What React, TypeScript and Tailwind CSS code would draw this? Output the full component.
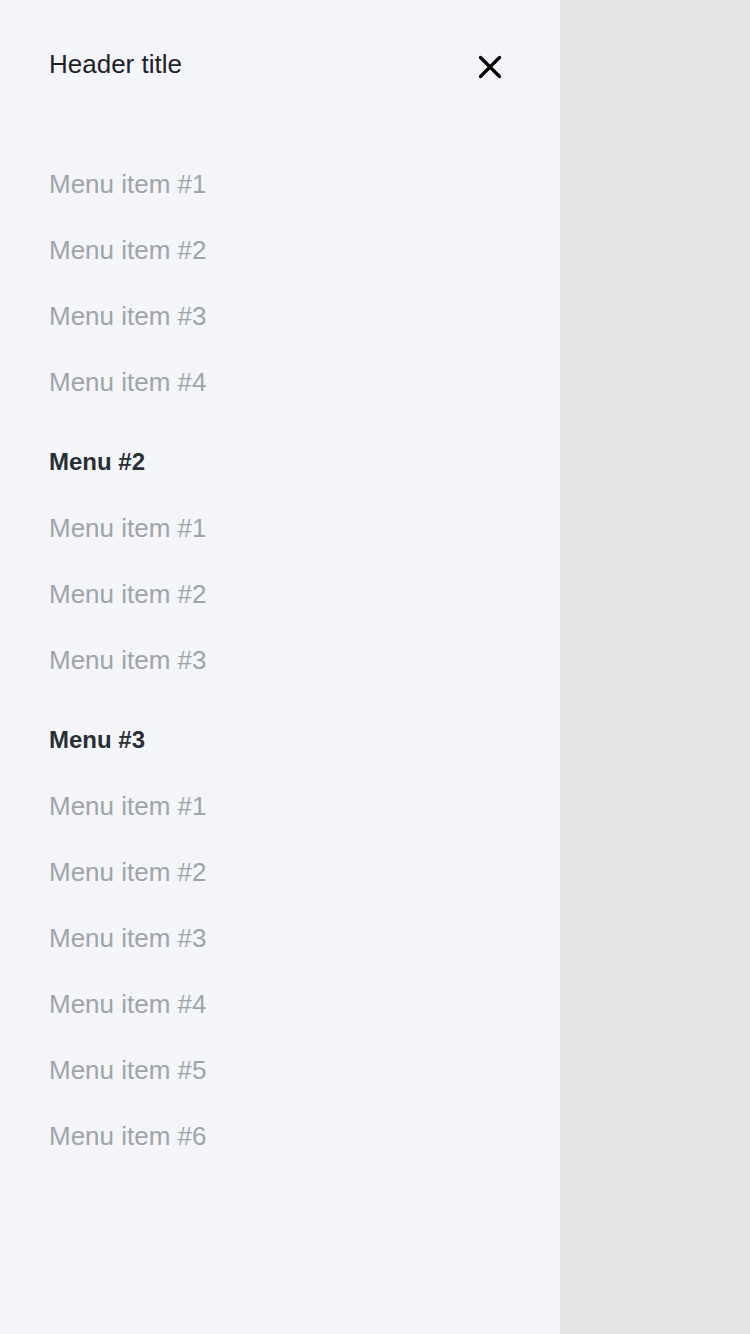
import React from "react";

const font = { fontFamily: '"Liberation Sans", Arial, sans-serif' };

function Item({ label }: { label: string }) {
  return (
    <div className="h-[66px] flex items-center text-[26px] text-[#a0a4aa] leading-none">
      {label}
    </div>
  );
}

function Heading({ label }: { label: string }) {
  return (
    <div className="mt-[14px] h-[66px] flex items-center text-[24px] font-bold text-[#2a2f36] leading-none">
      {label}
    </div>
  );
}

export default function App() {
  return (
    <div className="flex w-[750px] h-[1334px] bg-[#e4e4e4]" style={font}>
      <div className="w-[560px] h-full bg-[#f4f5f9] pl-[49px] pr-[58px]">
        <div className="pt-[32px] h-[96px] flex items-center justify-between">
          <div className="text-[26px] text-[#1f2229] leading-none">Header title</div>
          <svg width="24" height="24" viewBox="0 0 24 24" className="mt-[6px]">
            <path d="M2.5 2.5 L21.5 21.5 M21.5 2.5 L2.5 21.5" stroke="#000" strokeWidth="3.2" strokeLinecap="round" />
          </svg>
        </div>
        <div className="mt-[55px]">
          <Item label="Menu item #1" />
          <Item label="Menu item #2" />
          <Item label="Menu item #3" />
          <Item label="Menu item #4" />
          <Heading label="Menu #2" />
          <Item label="Menu item #1" />
          <Item label="Menu item #2" />
          <Item label="Menu item #3" />
          <Heading label="Menu #3" />
          <Item label="Menu item #1" />
          <Item label="Menu item #2" />
          <Item label="Menu item #3" />
          <Item label="Menu item #4" />
          <Item label="Menu item #5" />
          <Item label="Menu item #6" />
        </div>
      </div>
    </div>
  );
}
